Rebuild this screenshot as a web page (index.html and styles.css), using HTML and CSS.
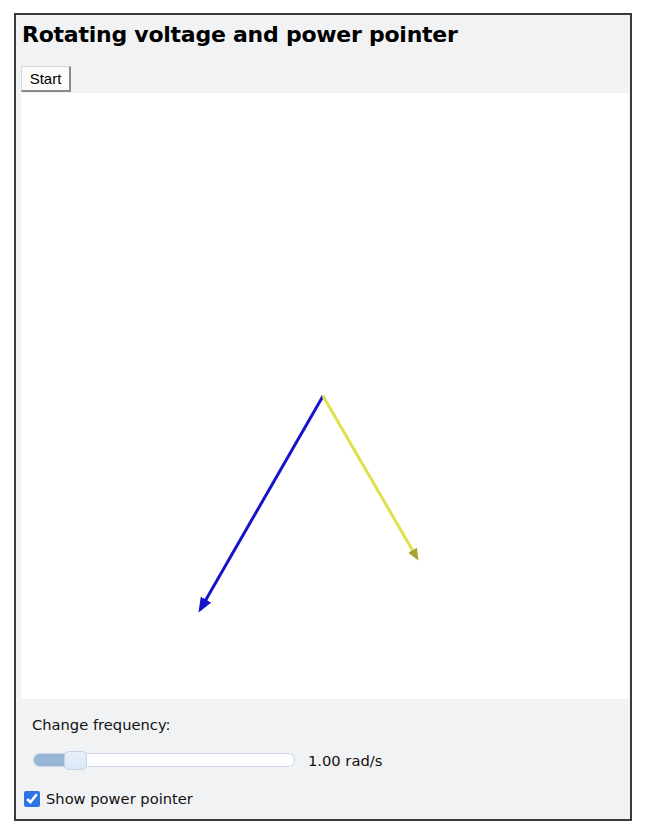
FILE: index.html
```html
<!DOCTYPE html>
<html>
<head>
<meta charset="utf-8">
<link rel="stylesheet" href="styles.css">
</head>
<body>
<div class="frame">
  <h1 class="title">Rotating voltage and power pointer</h1>
  <button class="start">Start</button>
  <div class="canvas">
    <svg width="608" height="606" viewBox="0 0 608 606">
      <defs>
        <marker id="bluehead" markerWidth="5" markerHeight="4" refX="4" refY="2" orient="auto" markerUnits="strokeWidth">
          <path d="M0,0 L5,2 L0,4 Z" fill="#1212c8"/>
        </marker>
        <marker id="yellowhead" markerWidth="4" markerHeight="3.4" refX="3" refY="1.7" orient="auto" markerUnits="strokeWidth">
          <path d="M0,0 L4,1.7 L0,3.4 Z" fill="#a8a434"/>
        </marker>
      </defs>
      <line x1="302" y1="303" x2="179" y2="517" stroke="#1414cc" stroke-width="3" marker-end="url(#bluehead)"/>
      <line x1="302" y1="303" x2="396" y2="465" stroke="#e2e04a" stroke-width="3" marker-end="url(#yellowhead)"/>
    </svg>
  </div>
  <div class="controls">
    <div class="label">Change frequency:</div>
    <div class="slider-row">
      <input class="slider" type="range" min="0" max="8" step="0.01" value="1">
      <span class="value">1.00 rad/s</span>
    </div>
    <label class="check-row">
      <input class="check" type="checkbox" checked>
      <span>Show power pointer</span>
    </label>
  </div>
</div>
</body>
</html>
```
FILE: styles.css
```css
html, body {
  margin: 0;
  padding: 0;
  background: #ffffff;
}
body {
  padding: 13px 0 0 14px;
}
.frame {
  box-sizing: border-box;
  width: 618px;
  height: 808px;
  border: 2px solid #3a3a3a;
  background: #f1f2f4;
  padding: 0 0 0 5px;
  font-family: "DejaVu Sans", Verdana, sans-serif;
  color: #111;
}
.title {
  margin: 6px 0 0 1px;
  font-size: 22px;
  line-height: 28px;
  font-weight: bold;
  letter-spacing: -0.25px;
  color: #000;
}
.start {
  display: block;
  margin: 17px 0 0 0;
  width: 50px;
  height: 26px;
  padding: 0;
  font-family: "Liberation Sans", Arial, sans-serif;
  font-size: 15px;
  color: #000;
  background: #fbfbfb;
  border: 1px solid #d8d8d8;
  border-right: 2px solid #8a8a8a;
  border-bottom: 2px solid #8a8a8a;
  border-radius: 1px;
}
.canvas {
  width: 608px;
  height: 606px;
  background: #ffffff;
  margin-top: 1px;
}
.canvas svg {
  display: block;
}
.controls {
  padding: 16px 0 0 3px;
  font-size: 14.7px;
}
.label {
  padding-left: 8px;
  line-height: 20px;
}
.slider-row {
  display: flex;
  align-items: center;
  margin-top: 15px;
  padding-left: 9px;
  height: 20px;
}
.slider {
  -webkit-appearance: none;
  appearance: none;
  width: 262px;
  height: 14px;
  margin: 0;
  border-radius: 7px;
  border: 1px solid #cbd7e6;
  background: linear-gradient(to right, #98b6d6 0, #98b6d6 38px, #ffffff 38px);
  box-sizing: border-box;
}
.slider::-webkit-slider-thumb {
  -webkit-appearance: none;
  appearance: none;
  width: 23px;
  height: 19px;
  border-radius: 5px;
  background: linear-gradient(#e8f0fa, #dce8f6);
  border: 1px solid #c3d3e8;
  box-sizing: border-box;
}
.value {
  margin-left: 13px;
}
.check-row {
  display: flex;
  align-items: center;
  margin-top: 20px;
  gap: 6px;
}
.check {
  width: 16px;
  height: 16px;
  margin: 0 0 0 0;
  accent-color: #2f74e6;
}
```
